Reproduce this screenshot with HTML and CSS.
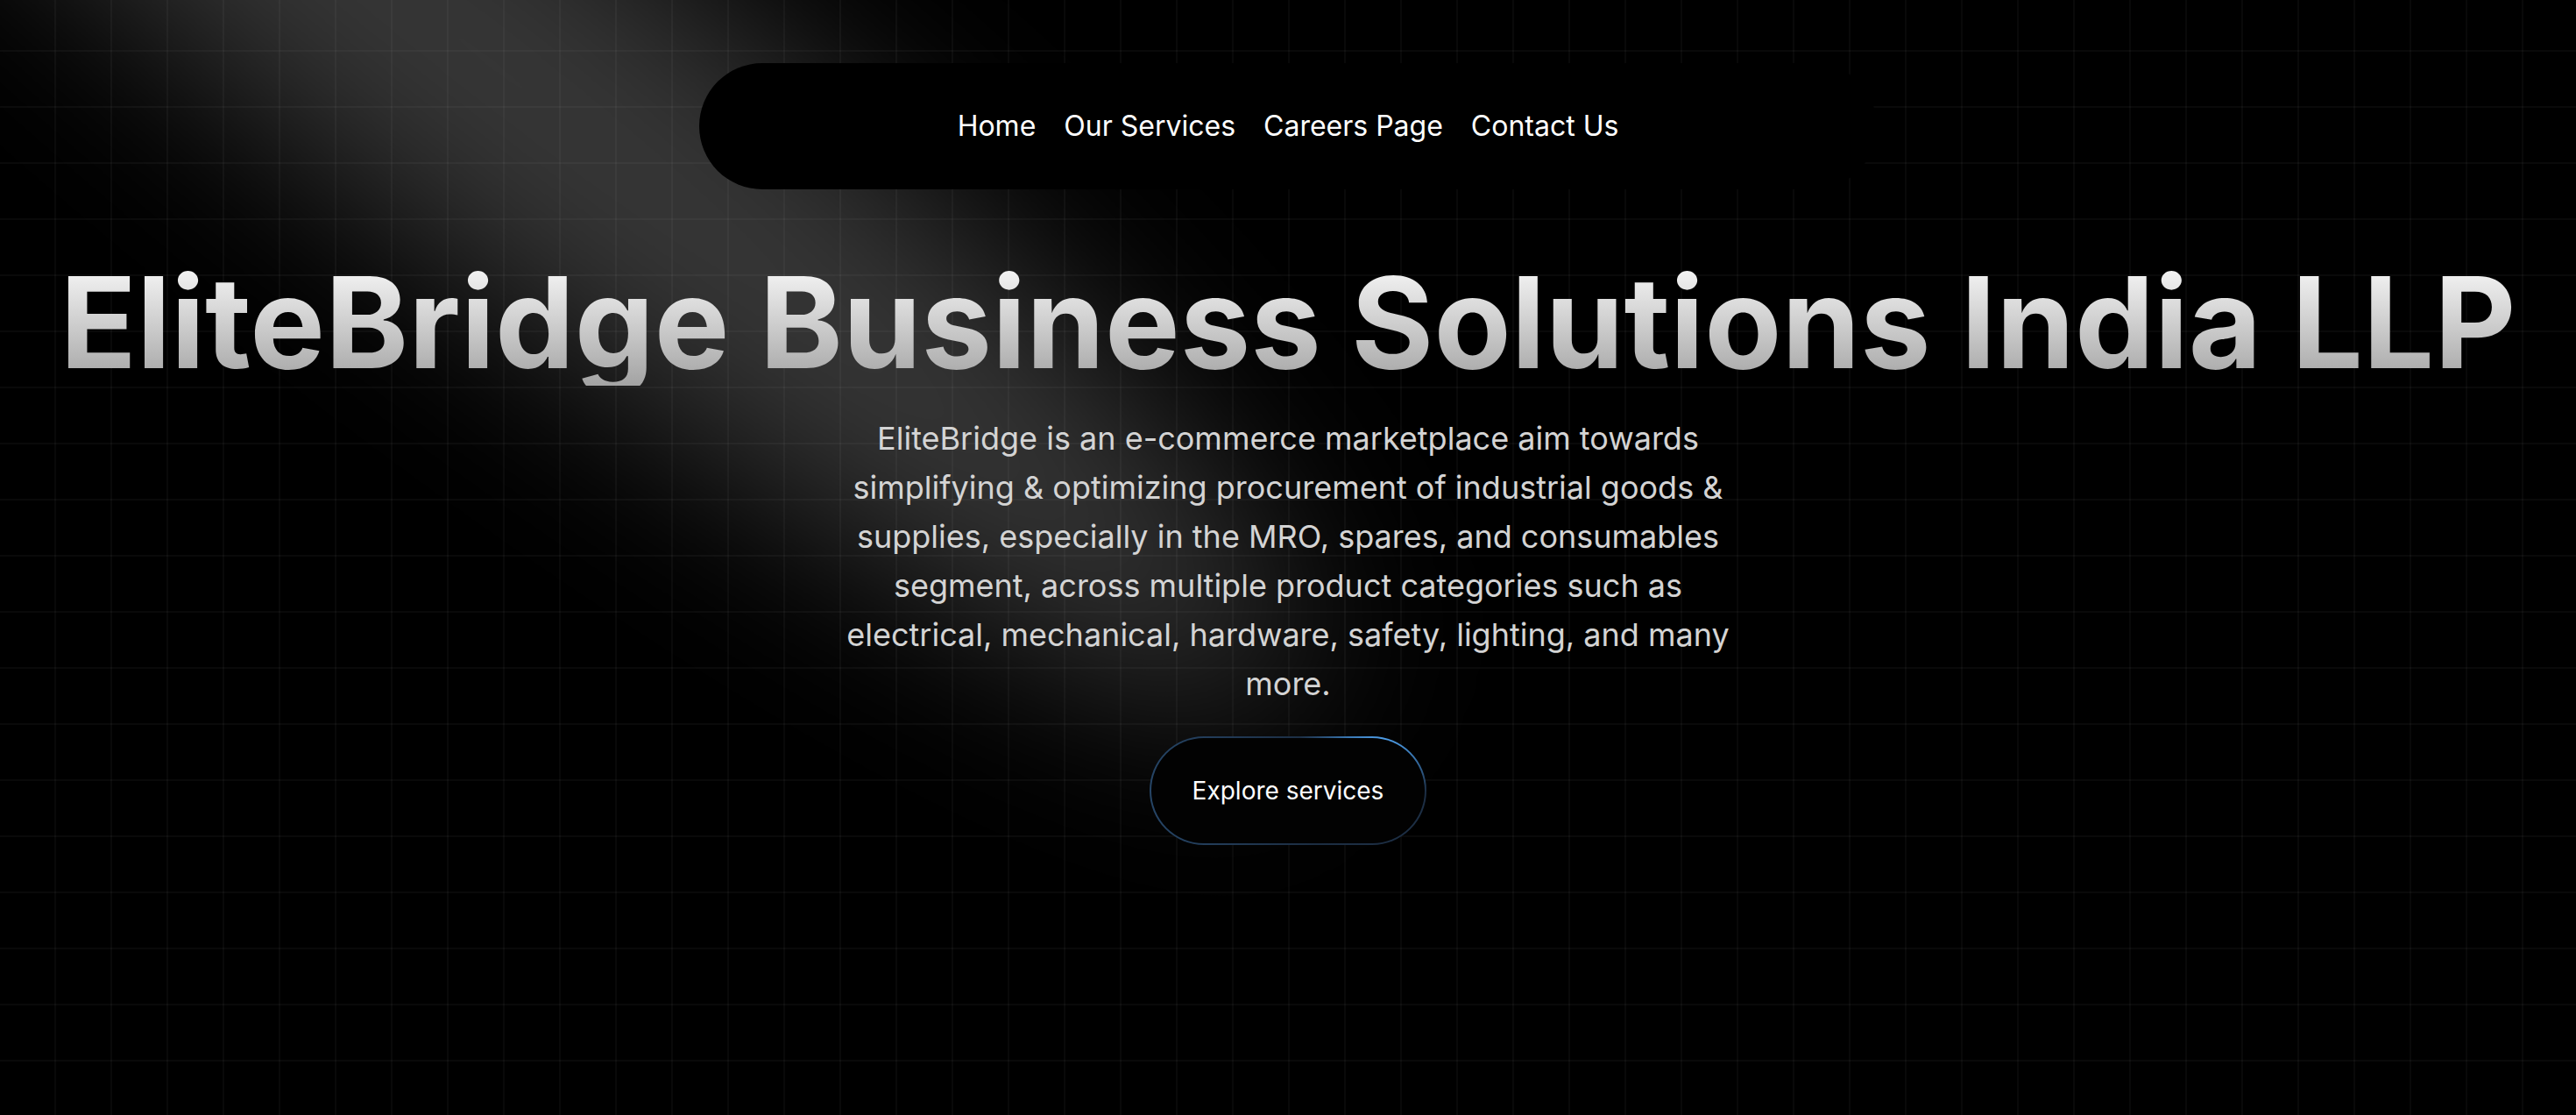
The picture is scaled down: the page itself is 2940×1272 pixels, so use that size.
FILE: index.html
```html
<!DOCTYPE html>
<html lang="en">
<head>
<meta charset="utf-8">
<title>EliteBridge Business Solutions India LLP</title>
<link rel="stylesheet" href="styles.css">
</head>
<body>
<main class="hero">
  <div class="spotlight" aria-hidden="true"></div>
  <nav class="nav">
    <a class="nav-link" href="#">Home</a>
    <a class="nav-link" href="#">Our Services</a>
    <a class="nav-link" href="#">Careers Page</a>
    <a class="nav-link" href="#">Contact Us</a>
  </nav>
  <h1 class="title">EliteBridge Business Solutions India LLP</h1>
  <p class="lead">EliteBridge is an e-commerce marketplace aim towards simplifying &amp; optimizing procurement of industrial goods &amp; supplies, especially in the MRO, spares, and consumables segment, across multiple product categories such as electrical, mechanical, hardware, safety, lighting, and many more.</p>
  <a class="btn-frame" href="#"><span class="btn-inner">Explore services</span></a>
</main>
</body>
</html>
```

FILE: styles.css
```css
* { box-sizing: border-box; }
html, body { margin: 0; padding: 0; background: #000; }
body { font-family: Inter, "Noto Sans", "Liberation Sans", sans-serif; color: #fff; }

.hero {
  position: relative;
  overflow: hidden;
  min-height: 1272px;
  display: flex;
  flex-direction: column;
  align-items: center;
  background-color: #000;
  background-image:
    linear-gradient(to right, transparent 62px, rgba(255,255,255,0.035) 62px, rgba(255,255,255,0.035) 64px),
    linear-gradient(to bottom, rgba(255,255,255,0.035) 0, rgba(255,255,255,0.035) 2px, transparent 2px);
  background-size: 64px 64px;
  background-position: 0 57px;
}

.spotlight {
  position: absolute;
  left: -605px;
  top: -138px;
  width: 2330px;
  height: 420px;
  border-radius: 50%;
  background: rgba(255,255,255,0.21);
  filter: blur(105px);
  transform: rotate(38deg);
  pointer-events: none;
  z-index: 0;
}

.nav {
  position: relative;
  z-index: 2;
  margin-top: 72px;
  width: 1344px;
  height: 144px;
  border-radius: 72px;
  background: #000;
  display: flex;
  align-items: center;
  justify-content: center;
  gap: 32px;
}
.nav-link {
  color: #fff;
  text-decoration: none;
  font-size: 32px;
  font-weight: 400;
  line-height: 1;
}

.title {
  position: relative;
  z-index: 2;
  margin: 80px 0 0;
  font-size: 144px;
  line-height: 144px;
  font-weight: 700;
  text-align: center;
  white-space: nowrap;
  background: linear-gradient(to bottom, #fafafa, #a3a3a3);
  -webkit-background-clip: text;
  background-clip: text;
  color: transparent;
}

.lead {
  position: relative;
  z-index: 2;
  margin: 32px 0 0;
  max-width: 1024px;
  font-size: 36px;
  line-height: 56px;
  font-weight: 400;
  color: #d4d4d4;
  text-align: center;
}

.btn-frame {
  position: relative;
  z-index: 2;
  margin-top: 32px;
  width: 316px;
  height: 124px;
  padding: 2px;
  border-radius: 62px;
  text-decoration: none;
  background:
    radial-gradient(ellipse 100px 70px at 86% 0%, rgba(80,160,235,1) 0, rgba(70,150,225,0.7) 45%, rgba(40,90,150,0) 100%),
    linear-gradient(to right, #264566, #1c2d42 60%, #1d2f45);
  display: flex;
}
.btn-inner {
  flex: 1;
  border-radius: 60px;
  background: #020202;
  display: flex;
  align-items: center;
  justify-content: center;
  color: #fff;
  font-size: 28px;
  font-weight: 400;
}
```
